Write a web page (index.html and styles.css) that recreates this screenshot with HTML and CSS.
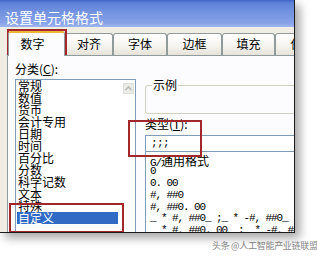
FILE: index.html
```html
<!DOCTYPE html>
<html lang="zh-CN">
  <head>
    <meta charset="utf-8">
    <title>设置单元格格式</title>
    <link rel="stylesheet" href="styles.css">
  </head>

  <body>
    <div class="screen">
      <div class="dialog">
        <div class="titlebar">设置单元格格式</div>

        <div class="tabs">
          <div class="tab active">数字</div>
          <div class="tab t-align">对齐</div>
          <div class="tab t-font">字体</div>
          <div class="tab t-border">边框</div>
          <div class="tab t-fill">填充</div>
          <div class="tab t-protect">保护</div>
        </div>

        <div class="panel">
          <div class="left">
            <div class="label">分类(<u>C</u>):</div>
            <div class="listbox">
              <ul class="cats">
                <li>常规</li>
                <li>数值</li>
                <li>货币</li>
                <li>会计专用</li>
                <li>日期</li>
                <li>时间</li>
                <li>百分比</li>
                <li>分数</li>
                <li>科学记数</li>
                <li>文本</li>
                <li>特殊</li>
                <li class="selected">自定义</li>
              </ul>
              <div class="scrollbar">
                <div class="arrow">
                  <svg width="9" height="9" viewBox="0 0 9 9"><path d="M1.5 6 L4.5 3 L7.5 6" fill="none" stroke="#b9b9b9" stroke-width="1.6"/></svg>
                </div>
              </div>
            </div>
          </div>

          <div class="right">
            <fieldset class="sample">
              <legend>示例</legend>
            </fieldset>
            <div class="label">类型(<u>T</u>):</div>
            <div class="typebox">;;;</div>
            <ul class="formats">
              <li>G/<span class="cjk">通用格式</span></li>
              <li>0</li>
              <li>0. 00</li>
              <li>#, ##0</li>
              <li>#, ##0. 00</li>
              <li>_ * #, ##0_ ;_ * -#, ##0_</li>
              <li>_ * #, ##0. 00_ ;_ * -#, ##0. 00_</li>
            </ul>
          </div>
        </div>

        <!-- 标注的红框 -->
        <div class="mark mark-tab"></div>
        <div class="mark mark-custom"></div>
        <div class="mark mark-type"></div>
      </div>

      <div class="watermark">头条 @人工智能产业链联盟</div>
    </div>
  </body>
</html>
```

FILE: styles.css
```css
* {
  box-sizing: border-box;
}

html, body {
  margin: 0;
}

body {
  background: #fff;
  font-family: "Noto Sans CJK SC", sans-serif;
  font-size: 12px;
  color: #000;
}

.screen {
  width: 317px;
  height: 256px;
  overflow: hidden;
}

.dialog {
  position: relative;
  width: 295px;
  height: 233px;
  overflow: hidden;
  background: #f0eee4;
  border-right: 1px solid #1c1c1c;
  border-bottom: 1px solid #1c1c1c;
  box-shadow: 5px 5px 9px rgba(0, 0, 0, 0.35);
}

.titlebar {
  height: 27px;
  padding: 6px 0 0 5px;
  line-height: 22px;
  font-size: 14px;
  color: #fff;
  background: linear-gradient(180deg, #3f64c8 0, #5f82d8 3px, #7393e0 45%, #86a2e8 85%, #9fb6ee 100%);
}

/* タブ */
.tabs {
  display: flex;
  align-items: flex-end;
  height: 28px;
  padding-left: 8px;
}

.tab {
  flex: none;
  height: 22px;
  line-height: 20px;
  font-size: 12px;
  text-align: center;
  white-space: nowrap;
  border: 1px solid #919b9c;
  border-bottom: none;
  border-radius: 3px 3px 0 0;
  background: linear-gradient(#ffffff, #f4f3ee 60%, #e4e2d8);
}

.tab.active {
  position: relative;
  z-index: 1;
  width: 57px;
  height: 25px;
  margin-bottom: -1px;
  padding-right: 8px;
  line-height: 21px;
  background: #fcfcfe;
  border-top: 2px solid #f0b53c;
}

.t-align { width: 48px; }
.t-font { width: 54px; }
.t-border { width: 55px; }
.t-fill { width: 53px; }
.t-protect { width: 55px; }

/* パネル */
.panel {
  display: grid;
  grid-template-columns: 121px 170px;
  column-gap: 9px;
  height: 178px;
  margin-left: 7px;
  padding: 6px 0 0 7px;
  background: #fcfcfe;
  border-top: 1px solid #919b9c;
  border-left: 1px solid #919b9c;
}

.label {
  height: 14px;
  line-height: 14px;
  font-size: 12px;
  white-space: nowrap;
}

.listbox {
  display: flex;
  height: 160px;
  margin-top: 3px;
  background: #fff;
  border: 1px solid #7f9db9;
}

.cats {
  flex: 1;
  margin: 0;
  padding: 0;
  list-style: none;
}

.cats li {
  height: 12px;
  line-height: 12px;
  padding-left: 2px;
  white-space: nowrap;
}

.cats li.selected {
  width: 101px;
  margin-left: 1px;
  padding-left: 1px;
  background: #316ac5;
  color: #fff;
}

.scrollbar {
  width: 13px;
  padding: 3px 1px 0;
}

.arrow {
  display: flex;
  align-items: center;
  justify-content: center;
  width: 11px;
  height: 11px;
  background: #ebebe8;
  border: 1px solid #dededa;
}

.right {
  display: flex;
  flex-direction: column;
}

.sample {
  height: 35px;
  margin: 17px 0 0;
  padding: 0;
  border: 1px solid #d0d0bf;
  border-radius: 3px;
}

.sample legend {
  margin-left: 6px;
  padding: 0 1px;
  line-height: 12px;
  font-size: 12px;
}

.right .label {
  margin-top: 3px;
}

.typebox {
  height: 17px;
  margin-top: 4px;
  padding-left: 5px;
  line-height: 15px;
  font-family: "Liberation Mono", monospace;
  font-size: 11px;
  letter-spacing: -0.6px;
  background: #fff;
  border: 1px solid #7f9db9;
}

.formats {
  flex: 1;
  margin: 0;
  padding: 2.5px 0 0 4px;
  list-style: none;
  background: #fff;
  border-left: 1px solid #7f9db9;
  font-family: "Liberation Mono", "Noto Sans CJK SC", monospace;
  font-size: 11px;
  letter-spacing: -1.1px;
}

.formats li {
  height: 11.8px;
  line-height: 11.8px;
  white-space: nowrap;
}

.formats .cjk {
  font-family: "Noto Sans CJK SC", sans-serif;
  font-size: 12px;
  letter-spacing: 0;
}

.mark {
  position: absolute;
  border: 2px solid #a3262b;
}

.mark-tab {
  left: 7px;
  top: 29px;
  width: 60px;
  height: 26px;
}

.mark-custom {
  left: 9px;
  top: 203px;
  width: 115px;
  height: 30px;
}

.mark-type {
  left: 128px;
  top: 120px;
  width: 74px;
  height: 37px;
}

.watermark {
  margin: 7.5px 0 0 212px;
  line-height: 10px;
  font-size: 9px;
  letter-spacing: -0.3px;
  color: #8a8a8a;
  white-space: nowrap;
}
```
